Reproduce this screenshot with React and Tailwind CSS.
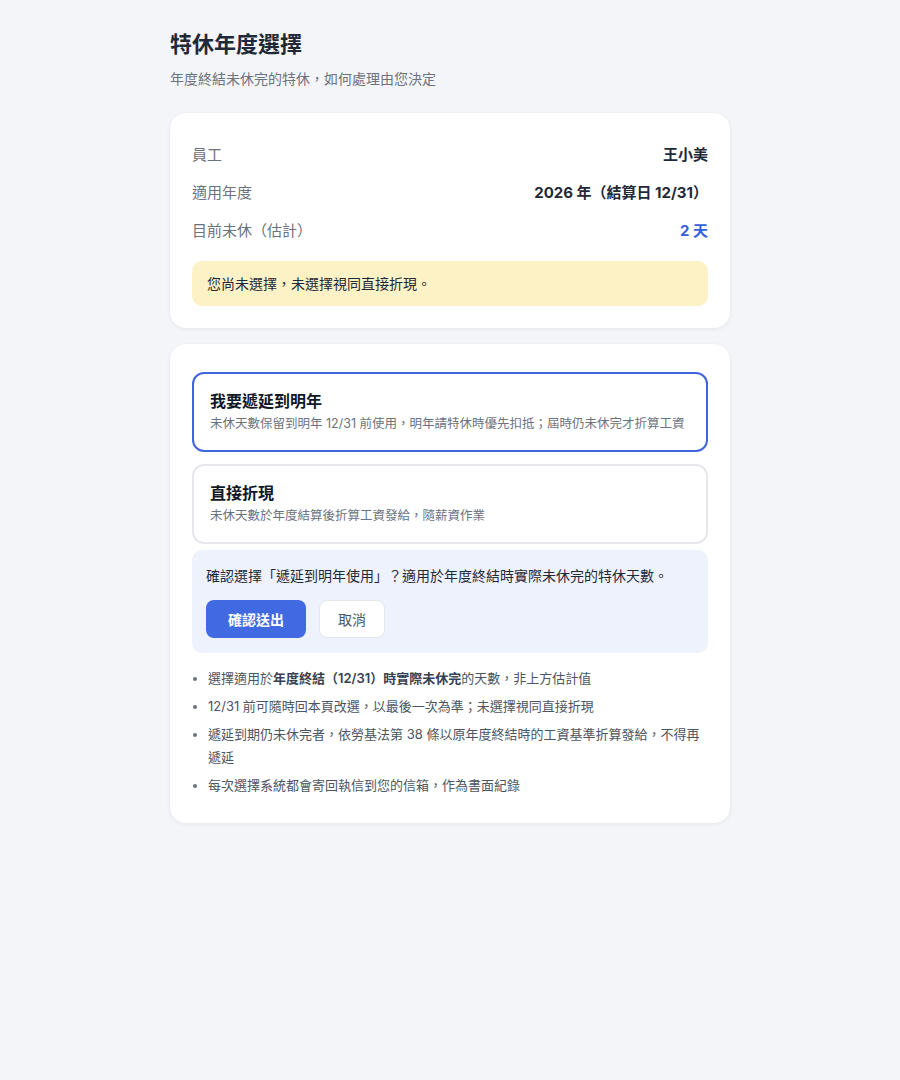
import React, { useState } from 'react';

const font = { fontFamily: '"Inter", "Noto Sans CJK TC", "Noto Sans", sans-serif' };

const options = [
  {
    key: 'defer',
    title: '我要遞延到明年',
    desc: '未休天數保留到明年 12/31 前使用，明年請特休時優先扣抵；屆時仍未休完才折算工資',
    label: '遞延到明年使用',
  },
  {
    key: 'cash',
    title: '直接折現',
    desc: '未休天數於年度結算後折算工資發給，隨薪資作業',
    label: '直接折現',
  },
];

function InfoRow({ label, children }) {
  return (
    <div className="flex h-[38px] items-center justify-between text-[15px]">
      <span className="text-[#6b7280]">{label}</span>
      {children}
    </div>
  );
}

export default function App() {
  const [choice, setChoice] = useState('defer');
  const current = options.find(o => o.key === choice);

  return (
    <div className="min-h-[1080px] bg-[#f4f5f9]" style={font}>
      <div className="mx-auto max-w-[560px] pt-[30px]">
        <h1 className="text-[22px] font-bold leading-[28px] text-[#1f2937]">特休年度選擇</h1>
        <p className="mt-[11px] text-[14px] leading-[20px] text-[#6b7280]">年度終結未休完的特休，如何處理由您決定</p>

        {/* Summary card */}
        <div className="mt-[24px] rounded-2xl bg-white px-[22px] pt-[23px] pb-[22px] shadow-[0_1px_4px_rgba(15,23,42,0.07)]">
          <InfoRow label="員工">
            <span className="font-bold text-[#1f2937]">王小美</span>
          </InfoRow>
          <InfoRow label="適用年度">
            <span className="font-bold text-[#1f2937]">2026 年（結算日 12/31）</span>
          </InfoRow>
          <InfoRow label="目前未休（估計）">
            <span className="font-bold text-[#3461db]">2 天</span>
          </InfoRow>
          <div className="mt-[11px] rounded-[10px] bg-[#fdf1c6] px-[15px] py-[12px] text-[14px] leading-[21px] text-[#1f2937]">
            您尚未選擇，未選擇視同直接折現。
          </div>
        </div>

        {/* Choice card */}
        <div className="mt-[16px] rounded-2xl bg-white px-[22px] pt-[28px] pb-[26px] shadow-[0_1px_4px_rgba(15,23,42,0.07)]">
          <div className="flex flex-col gap-[12px]">
            {options.map(o => (
              <button
                key={o.key}
                type="button"
                onClick={() => setChoice(o.key)}
                className={
                  'rounded-xl border-2 bg-white px-4 py-4 text-left ' +
                  (choice === o.key ? 'border-[#3f66dc]' : 'border-[#e5e7eb]')
                }
              >
                <div className="text-[16px] font-bold leading-[22px] text-[#111827]">{o.title}</div>
                <div className="mt-[2px] text-[12.5px] leading-[20px] text-[#6b7280]">{o.desc}</div>
              </button>
            ))}
          </div>

          <div className="mt-[6px] rounded-[10px] bg-[#eef2fd] px-[14px] py-[15px]">
            <p className="text-[14px] leading-[22px] text-[#1f2937]">
              確認選擇「{current.label}」？適用於年度終結時實際未休完的特休天數。
            </p>
            <div className="mt-[13px] flex gap-[13px]">
              <button type="button" className="h-[38px] w-[100px] rounded-lg bg-[#4169e1] text-[14px] font-semibold text-white">
                確認送出
              </button>
              <button type="button" className="h-[38px] w-[66px] rounded-lg border border-[#e5e7eb] bg-white text-[14px] text-[#4b5563]">
                取消
              </button>
            </div>
          </div>

          <ul className="mt-[14px] list-disc pl-[16px] text-[13px] leading-[23px] text-[#4b5563] marker:text-[#6b7280]">
            <li className="mb-[5px]">
              選擇適用於<strong className="font-semibold text-[#374151]">年度終結（12/31）時實際未休完</strong>的天數，非上方估計值
            </li>
            <li className="mb-[5px]">12/31 前可隨時回本頁改選，以最後一次為準；未選擇視同直接折現</li>
            <li className="mb-[5px]">遞延到期仍未休完者，依勞基法第 38 條以原年度終結時的工資基準折算發給，不得再遞延</li>
            <li>每次選擇系統都會寄回執信到您的信箱，作為書面紀錄</li>
          </ul>
        </div>
      </div>
    </div>
  );
}
